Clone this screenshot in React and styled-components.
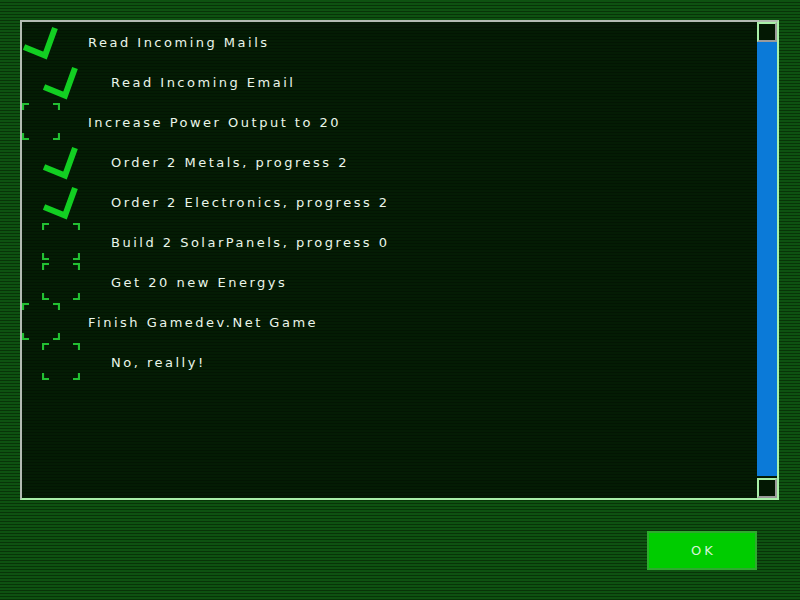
import styled, { createGlobalStyle } from "styled-components";

const GlobalStyle = createGlobalStyle`
  html, body {
    margin: 0;
    padding: 0;
    width: 800px;
    height: 600px;
    overflow: hidden;
  }
  body {
    font-family: "DejaVu Sans", "Liberation Sans", sans-serif;
  }
`;

const Screen = styled.div`
  width: 800px;
  height: 600px;
  box-sizing: border-box;
  padding: 20px 21px 0 20px;
  display: flex;
  flex-direction: column;
  background: repeating-linear-gradient(
    to bottom,
    #0e5211 0px,
    #0e5211 2px,
    #083408 2px,
    #083408 3px
  );
`;

const Panel = styled.div`
  height: 480px;
  box-sizing: border-box;
  border: 2px solid;
  border-color: #b2bcb2 #a8f0a8 #a8f0a8 #b2bcb2;
  display: flex;
  background: repeating-linear-gradient(
    to bottom,
    #041c04 0px,
    #041c04 2px,
    #031503 2px,
    #031503 3px
  );
`;

const List = styled.div`
  flex: 1;
  display: flex;
  flex-direction: column;
`;

const Row = styled.div`
  height: 40px;
  display: flex;
  align-items: center;
  padding-left: ${(p) => p.$level * 20}px;
`;

const Icon = styled.svg`
  width: 38px;
  height: 38px;
  flex: none;
`;

const Label = styled.span`
  margin-left: ${(p) => 28 + p.$level * 3}px;
  font-size: 13px;
  letter-spacing: 2.5px;
  color: #eaf6ea;
  white-space: nowrap;
`;

const ScrollBar = styled.div`
  width: 20px;
  display: flex;
  flex-direction: column;
`;

const ScrollButton = styled.div`
  width: 20px;
  height: 20px;
  box-sizing: border-box;
  border: 2px solid;
  border-color: #a8f0a8 #9a9a9a #9a9a9a #a8f0a8;
  background: #031803;
`;

const Track = styled.div`
  flex: 1;
  padding-bottom: 2px;
  display: flex;
`;

const Thumb = styled.div`
  flex: 1;
  background: #0b7ad8;
`;

const Footer = styled.div`
  display: flex;
  justify-content: flex-end;
  padding: 31px 22px 0 0;
`;

const OkButton = styled.button`
  width: 110px;
  height: 39px;
  border: 2px solid #2eaa2e;
  background: #00cc00;
  color: #d8f4d8;
  font-family: "DejaVu Sans", "Liberation Sans", sans-serif;
  font-size: 13px;
  letter-spacing: 3px;
  padding: 0 0 0 3px;
  cursor: pointer;
`;

const CheckIcon = () => (
  <Icon viewBox="0 0 38 38">
    <polyline
      points="2,24 23,32.5 33,5"
      fill="none"
      stroke="#12cf22"
      strokeWidth="6"
      strokeLinejoin="miter"
    />
  </Icon>
);

const BoxIcon = () => (
  <Icon viewBox="0 0 38 38">
    <g fill="none" stroke="#22c032" strokeWidth="2.2">
      <polyline points="1,7 1,1 7,1" />
      <polyline points="31,1 37,1 37,7" />
      <polyline points="1,30 1,36 7,36" />
      <polyline points="31,36 37,36 37,30" />
    </g>
  </Icon>
);

const tasks = [
  { text: "Read Incoming Mails", level: 0, done: true },
  { text: "Read Incoming Email", level: 1, done: true },
  { text: "Increase Power Output to 20", level: 0, done: false },
  { text: "Order 2 Metals, progress 2", level: 1, done: true },
  { text: "Order 2 Electronics, progress 2", level: 1, done: true },
  { text: "Build 2 SolarPanels, progress 0", level: 1, done: false },
  { text: "Get 20 new Energys", level: 1, done: false },
  { text: "Finish Gamedev.Net Game", level: 0, done: false },
  { text: "No, really!", level: 1, done: false },
];

export default function App() {
  return (
    <>
      <GlobalStyle />
      <Screen>
        <Panel>
          <List>
            {tasks.map((t) => (
              <Row key={t.text} $level={t.level}>
                {t.done ? <CheckIcon /> : <BoxIcon />}
                <Label $level={t.level}>{t.text}</Label>
              </Row>
            ))}
          </List>
          <ScrollBar>
            <ScrollButton />
            <Track>
              <Thumb />
            </Track>
            <ScrollButton />
          </ScrollBar>
        </Panel>
        <Footer>
          <OkButton>OK</OkButton>
        </Footer>
      </Screen>
    </>
  );
}
